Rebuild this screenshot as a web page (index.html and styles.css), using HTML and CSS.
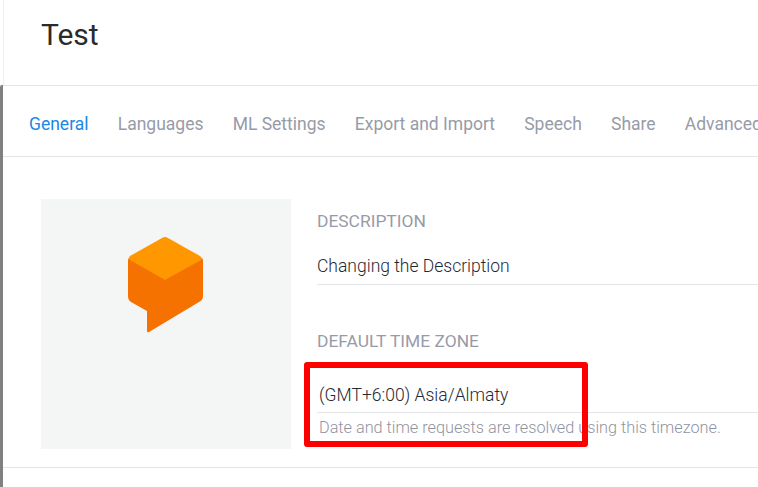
FILE: index.html
```html
<!DOCTYPE html>
<html lang="en">
<head>
<meta charset="utf-8">
<title>Test</title>
<link rel="stylesheet" href="styles.css">
</head>
<body>
<div class="page">
  <header class="head"><h1 class="title">Test</h1></header>
  <div class="body">
    <nav class="tabs">
      <a class="tab active">General</a>
      <a class="tab">Languages</a>
      <a class="tab">ML Settings</a>
      <a class="tab">Export and Import</a>
      <a class="tab">Speech</a>
      <a class="tab">Share</a>
      <a class="tab">Advanced</a>
    </nav>
    <section class="panel">
      <div class="avatar">
        <svg class="logo" width="75" height="96" viewBox="0 0 75 96" aria-hidden="true">
          <path fill="#f57100" d="M0 24 Q0 20 3 21 L37 40 L71 21 Q75 20 75 24 L75 59 Q75 63 71 65 L21 95 Q19 96 19 94 L19 74 L3 65 Q0 63 0 59 Z"/>
          <path fill="#ff9800" d="M34 1 Q37 -1 40 1 L72 19 Q75 21 73 23 L37 43 L2 23 Q0 21 2 19 Z"/>
        </svg>
      </div>
      <div class="fields">
        <div class="field">
          <div class="label">DESCRIPTION</div>
          <div class="value">Changing the Description</div>
        </div>
        <div class="field">
          <div class="label">DEFAULT TIME ZONE</div>
          <div class="value zone">(GMT+6:00) Asia/Almaty</div>
          <div class="hint">Date and time requests are resolved using this timezone.</div>
        </div>
      </div>
    </section>
    <div class="rule"></div>
  </div>
  <div class="mark"></div>
</div>
</body>
</html>
```
FILE: styles.css
```css
html, body {
  margin: 0;
  padding: 0;
  height: 100%;
  background: #fff;
  overflow: hidden;
}
.page {
  position: relative;
  width: 758px;
  height: 487px;
  overflow: hidden;
  font-family: Roboto, "Liberation Sans", sans-serif;
  display: flex;
  flex-direction: column;
}
.head {
  height: 85px;
  box-sizing: border-box;
  margin-left: 3px;
  border-left: 1px solid #eeeeee;
  padding-left: 37px;
  flex: none;
}
.title {
  margin: 0;
  padding-top: 17px;
  font-size: 30px;
  line-height: 36px;
  font-weight: 400;
  color: #2b2b2b;
}
.body {
  flex: 1;
  border-left: 3px solid #808080;
  border-top-left-radius: 2px;
  min-height: 0;
}
.tabs {
  height: 72px;
  box-sizing: border-box;
  border-top: 1px solid #e3e4e6;
  border-bottom: 1px solid #e3e4e6;
  padding-left: 26px;
  display: flex;
  gap: 29.2px;
  white-space: nowrap;
  overflow: hidden;
}
.tab {
  height: 71px;
  box-sizing: border-box;
  margin-bottom: -1px;
  line-height: 76px;
  font-size: 17.5px;
  color: #979ba8;
  flex: none;
}
.tab.active {
  color: #1a88e6;
  border-bottom: 1px solid #1a88e6;
}
.panel {
  display: flex;
  padding: 42px 0 0 38px;
  height: 310px;
  box-sizing: border-box;
}
.avatar {
  width: 250px;
  height: 250px;
  flex: none;
  background: #f4f6f5;
  padding: 38px 1px 0 0;
  box-sizing: border-box;
  display: flex;
  align-items: flex-start;
  justify-content: center;
}
.logo {
  display: block;
  overflow: visible;
}
.fields {
  flex: 1;
  padding-left: 26px;
  min-width: 0;
}
.field {
  height: 120px;
}
.label {
  padding-top: 12px;
  font-size: 17.4px;
  line-height: 20px;
  color: #979ba8;
}
.value {
  margin-top: 21px;
  height: 33px;
  box-sizing: border-box;
  font-size: 17.5px;
  font-weight: 300;
  line-height: 28px;
  color: #1f2a35;
  border-bottom: 1px solid #e3e4e6;
}
.zone {
  padding-left: 2px;
  margin-top: 30px;
  height: 32px;
}
.hint {
  margin-top: 1px;
  padding-left: 2px;
  font-size: 16.25px;
  font-weight: 300;
  line-height: 28px;
  color: #8f94a2;
  white-space: nowrap;
}
.rule {
  height: 1px;
  background: #e3e4e6;
}
.mark {
  position: absolute;
  left: 304px;
  top: 362px;
  width: 284px;
  height: 85px;
  box-sizing: border-box;
  border: 6px solid #ff0000;
  border-radius: 3px;
}
```
